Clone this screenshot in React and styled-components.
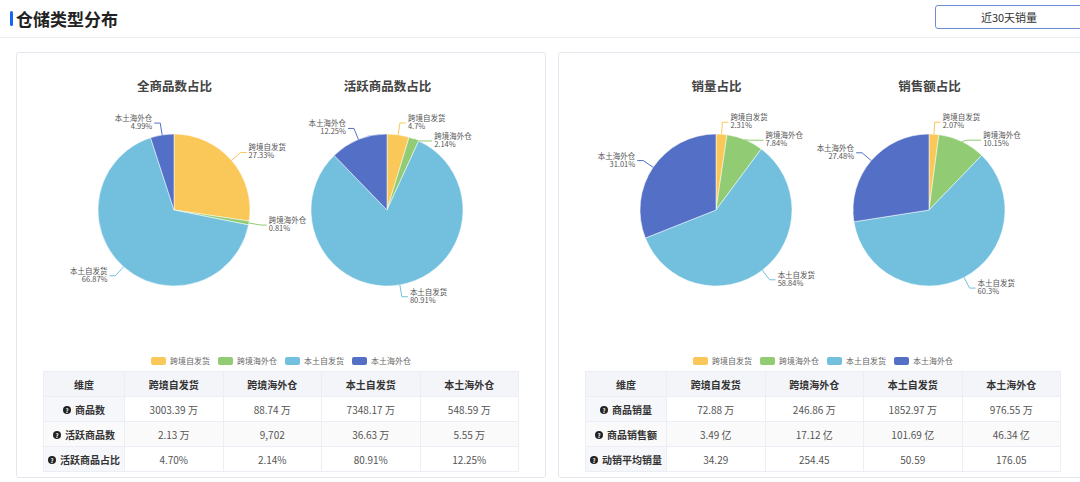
import React from 'react';
import styled, { createGlobalStyle } from 'styled-components';

const COLORS = ['#fac858', '#91cc75', '#73c0de', '#5470c6'];
const NAMES = ['跨境自发货', '跨境海外仓', '本土自发货', '本土海外仓'];

const GlobalStyle = createGlobalStyle`
  body {
    margin: 0;
    background: #fff;
    font-family: "Noto Sans CJK SC", "Noto Sans", sans-serif;
    overflow: hidden;
  }
`;

const Header = styled.div`
  height: 37px;
  display: flex;
  align-items: center;
  justify-content: space-between;
  border-bottom: 1px solid #eceef2;
  padding-left: 10px;
`;

const Title = styled.h1`
  margin: 0;
  font-size: 17px;
  font-weight: 700;
  color: #222;
  display: flex;
  align-items: center;
  gap: 3px;
  &::before {
    content: '';
    width: 3px;
    height: 15px;
    border-radius: 2px;
    background: #1765f5;
  }
`;

const Select = styled.div`
  width: 146px;
  height: 22px;
  border: 1px solid #6e8fd8;
  border-radius: 3px;
  margin-right: -3px;
  margin-top: -3px;
  display: flex;
  align-items: center;
  justify-content: center;
  font-size: 11px;
  color: #333;
`;

const Cards = styled.div`
  display: flex;
  gap: 12px;
  padding: 14px 0 0 16px;
`;

const Card = styled.div`
  flex: 0 0 530px;
  height: 426px;
  box-sizing: border-box;
  border: 1px solid #e4e7ed;
  border-radius: 3px;
  padding-top: 24px;
  display: flex;
  flex-direction: column;
  align-items: center;
`;

const Charts = styled.div`
  display: flex;
`;

const ChartBox = styled.div`
  width: 213px;
  display: flex;
  flex-direction: column;
  align-items: center;
`;

const ChartTitle = styled.div`
  font-size: 12.5px;
  font-weight: 700;
  color: #444;
  height: 18px;
  line-height: 18px;
`;

const Legend = styled.div`
  margin-top: 40px;
  display: flex;
  gap: 8px;
  font-size: 8px;
  color: #666;
`;

const LegendItem = styled.span`
  display: flex;
  align-items: center;
  gap: 4px;
  &::before {
    content: '';
    width: 15px;
    height: 8px;
    border-radius: 2px;
    background: ${p => p.$c};
  }
`;

const Table = styled.table`
  margin-top: 5px;
  width: 476px;
  border-collapse: collapse;
  font-size: 10px;
  color: #555;
  text-align: center;
  td, th {
    border: 1px solid #ebeef5;
    height: 24px;
    padding: 0;
  }
  th {
    background: #f3f5f9;
    color: #333;
    font-weight: 700;
  }
  tr:nth-child(even) td { background: #fafafa; }
  td:first-child, th:first-child { width: 80px; }
  td:first-child { font-weight: 700; color: #333; background: #f5f7fa; }
`;

const Help = styled.span`
  display: inline-flex;
  align-items: center;
  justify-content: center;
  width: 8px;
  height: 8px;
  border-radius: 50%;
  background: #222;
  color: #fff;
  font-size: 6px;
  margin-right: 4px;
  vertical-align: 1px;
`;

function Pie({ values }) {
  const cx = 106, cy = 115, r = 76;
  const total = values.reduce((a, b) => a + b, 0);
  let a0 = 0;
  const pt = (a, rr) => [cx + rr * Math.sin(a), cy - rr * Math.cos(a)];
  const parts = values.map((v, i) => {
    const a1 = a0 + (v / total) * Math.PI * 2;
    const [x0, y0] = pt(a0, r);
    const [x1, y1] = pt(a1, r);
    const large = a1 - a0 > Math.PI ? 1 : 0;
    const mid = (a0 + a1) / 2;
    a0 = a1;
    const [lx0, ly0] = pt(mid, r);
    const [lx1, ly1] = pt(mid, r + 12);
    const right = Math.sin(mid) >= 0;
    return { i, v, d: `M${cx},${cy} L${x0},${y0} A${r},${r} 0 ${large} 1 ${x1},${y1} Z`, lx0, ly0, lx1, ly1, ly: ly1, right };
  });
  // keep labels on one side from overlapping
  [true, false].forEach(side => {
    const list = parts.filter(p => p.right === side).sort((a, b) => a.ly - b.ly);
    for (let k = 1; k < list.length; k++) {
      if (list[k].ly < list[k - 1].ly + 18) list[k].ly = list[k - 1].ly + 18;
    }
  });
  return (
    <svg width="213" height="220" style={{ overflow: 'visible' }}>
      {parts.map(p => {
        const shifted = Math.abs(p.ly - p.ly1) > 1;
        const lx2 = p.lx1 + (p.right ? (shifted ? 14 : 6) : -6);
        const tx = lx2 + (p.right ? 2 : -2);
        return (
          <g key={p.i}>
            <path d={p.d} fill={COLORS[p.i]} stroke="#fff" strokeWidth="0.5" />
            <polyline points={`${p.lx0},${p.ly0} ${p.lx1},${p.ly} ${lx2},${p.ly}`} fill="none" stroke={COLORS[p.i]} strokeWidth="1" />
            <text x={tx} y={p.ly - 2} fontSize="7.5" fill="#555" textAnchor={p.right ? 'start' : 'end'}>
              <tspan x={tx}>{NAMES[p.i]}</tspan>
              <tspan x={tx} dy="8">{p.v}%</tspan>
            </text>
          </g>
        );
      })}
    </svg>
  );
}

function Panel({ charts, rows }) {
  return (
    <Card>
      <Charts>
        {charts.map(c => (
          <ChartBox key={c.title}>
            <ChartTitle>{c.title}</ChartTitle>
            <Pie values={c.values} />
          </ChartBox>
        ))}
      </Charts>
      <Legend>
        {NAMES.map((n, i) => <LegendItem key={n} $c={COLORS[i]}>{n}</LegendItem>)}
      </Legend>
      <Table>
        <thead>
          <tr><th>维度</th>{NAMES.map(n => <th key={n}>{n}</th>)}</tr>
        </thead>
        <tbody>
          {rows.map(r => (
            <tr key={r[0]}>
              <td><Help>?</Help>{r[0]}</td>
              {r.slice(1).map((c, i) => <td key={i}>{c}</td>)}
            </tr>
          ))}
        </tbody>
      </Table>
    </Card>
  );
}

export default function App() {
  return (
    <>
      <GlobalStyle />
      <Header>
        <Title>仓储类型分布</Title>
        <Select>近30天销量</Select>
      </Header>
      <Cards>
        <Panel
          charts={[
            { title: '全商品数占比', values: [27.33, 0.81, 66.87, 4.99] },
            { title: '活跃商品数占比', values: [4.7, 2.14, 80.91, 12.25] },
          ]}
          rows={[
            ['商品数', '3003.39 万', '88.74 万', '7348.17 万', '548.59 万'],
            ['活跃商品数', '2.13 万', '9,702', '36.63 万', '5.55 万'],
            ['活跃商品占比', '4.70%', '2.14%', '80.91%', '12.25%'],
          ]}
        />
        <Panel
          charts={[
            { title: '销量占比', values: [2.31, 7.84, 58.84, 31.01] },
            { title: '销售额占比', values: [2.07, 10.15, 60.3, 27.48] },
          ]}
          rows={[
            ['商品销量', '72.88 万', '246.86 万', '1852.97 万', '976.55 万'],
            ['商品销售额', '3.49 亿', '17.12 亿', '101.69 亿', '46.34 亿'],
            ['动销平均销量', '34.29', '254.45', '50.59', '176.05'],
          ]}
        />
      </Cards>
    </>
  );
}
